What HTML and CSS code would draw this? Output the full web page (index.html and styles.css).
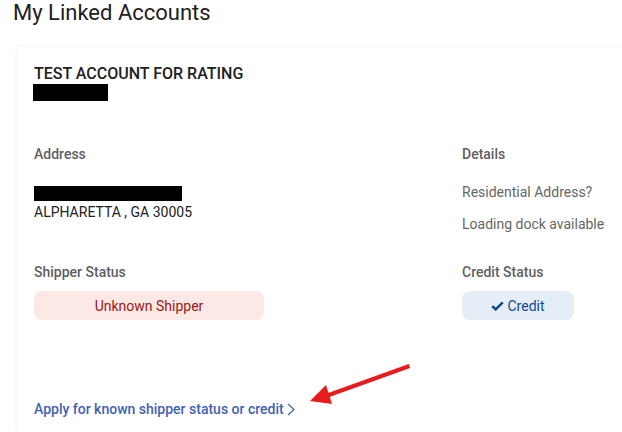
FILE: index.html
```html
<!DOCTYPE html>
<html lang="en">
<head>
<meta charset="utf-8">
<title>My Linked Accounts</title>
<link rel="stylesheet" href="styles.css">
</head>
<body>
<h1 class="page-title">My Linked Accounts</h1>
<section class="card">
  <h2 class="account-name">TEST ACCOUNT FOR RATING</h2>
  <div class="redact redact-id"></div>
  <div class="grid">
    <div class="col-main">
      <div class="label">Address</div>
      <div class="redact redact-street"></div>
      <div class="city">ALPHARETTA , GA 30005</div>
    </div>
    <div class="col-side">
      <div class="label">Details</div>
      <div class="detail detail-first">Residential Address?</div>
      <div class="detail">Loading dock available</div>
    </div>
    <div class="col-main">
      <div class="label">Shipper Status</div>
      <div class="pill pill-red">Unknown Shipper</div>
    </div>
    <div class="col-side">
      <div class="label">Credit Status</div>
      <div class="pill pill-blue">
        <svg class="check" viewBox="0 0 14 11" width="13" height="10"><path d="M1.2 5.6 L5 9.200 L12.800 1.600" fill="none" stroke="#0d4a94" stroke-width="2.800"/></svg>
        <span>Credit</span>
      </div>
    </div>
  </div>
  <a class="apply" href="#">Apply for known shipper status or credit
    <svg class="chev" viewBox="0 0 8 13" width="8" height="13"><path d="M1 1 L7 6.500 L1 12" fill="none" stroke="#3f62b5" stroke-width="1.200"/></svg>
  </a>
</section>
<svg class="arrow" viewBox="0 0 622 432" width="622" height="432">
  <path d="M409.500 366 L326 396" stroke="#e81c1c" stroke-width="4" fill="none"/>
  <path d="M310 401 L326 385 L332 404 Z" fill="#e81c1c"/>
</svg>
</body>
</html>
```
FILE: styles.css
```css
html, body {
  margin: 0;
  padding: 0;
  width: 622px;
  height: 432px;
  overflow: hidden;
  background: #fff;
}
body {
  position: relative;
  font-family: Roboto, "Liberation Sans", sans-serif;
  font-size: 14px;
  color: #212121;
}
.page-title {
  margin: 0;
  padding: 0 0 0 13px;
  height: 47px;
  font-size: 22px;
  line-height: 25px;
  font-weight: 400;
  color: #212121;
}
.card {
  margin-left: 17px;
  padding: 18px 0 0 17px;
  height: 385px;
  box-sizing: border-box;
  background: #fff;
  box-shadow: 0 0 4px rgba(0, 0, 0, 0.07);
}
.account-name {
  margin: 0;
  font-size: 16px;
  line-height: 17px;
  font-weight: 500;
  color: #212121;
}
.redact {
  background: #000;
}
.redact-id {
  width: 75px;
  height: 17px;
  margin-left: -1px;
  margin-top: 2px;
}
.grid {
  display: grid;
  grid-template-columns: 428px 1fr;
  margin-top: 45px;
}
.label {
  font-weight: 500;
  line-height: 17px;
  color: #5f5f5f;
}
.redact-street {
  width: 148px;
  height: 15px;
  margin-top: 23px;
}
.city {
  line-height: 17px;
  margin-top: 3px;
  color: #212121;
}
.detail {
  line-height: 17px;
  color: #666;
  margin-top: 15px;
}
.detail-first {
  margin-top: 21px;
}
.col-main, .col-side {
  height: 118px;
}
.pill {
  margin-top: 10px;
  height: 29px;
  border-radius: 8px;
  display: flex;
  align-items: center;
  justify-content: center;
  gap: 3px;
}
.pill-red {
  width: 230px;
  background: #fce9e6;
  color: #a01515;
}
.pill-blue {
  width: 112px;
  background: #e5edf6;
  color: #0d4a94;
}
.apply {
  display: flex;
  align-items: center;
  gap: 3px;
  margin-top: 19px;
  font-weight: 500;
  line-height: 17px;
  color: #3f62b5;
  text-decoration: none;
}
.arrow {
  position: absolute;
  top: 0;
  left: 0;
}
```
